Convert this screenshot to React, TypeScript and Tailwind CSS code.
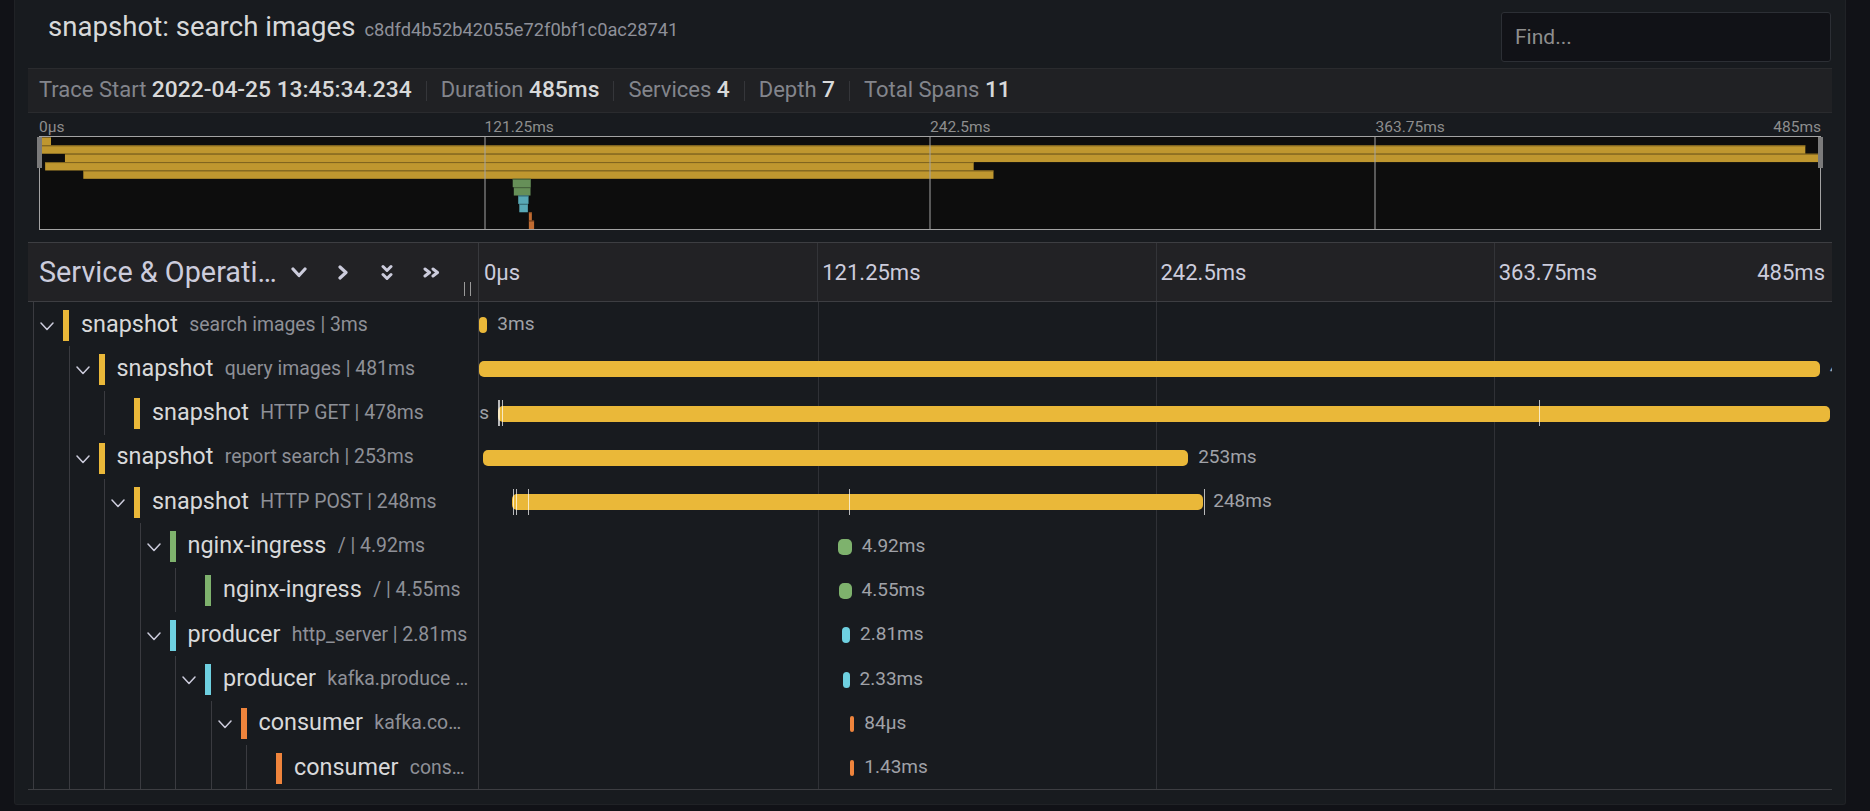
import React from 'react';

type Span = {
  service: string;
  op: string;
  level: number;
  kids: boolean;
  bar: string;
  mm: string;
  mmEdge: string;
  start: number;
  dur: number;
  label: string;
  leftLabel?: boolean;
  marks?: number[];
};

const TOTAL = 485;
const TL_W = 1352;
const MM_W = 1780;

const gold = { bar: 'bg-[#eab839]', mm: '#bf972f', mmEdge: '#7d621f' };
const green = { bar: 'bg-[#7eb26d]', mm: '#668f58', mmEdge: '#435e3a' };
const blue = { bar: 'bg-[#6ed0e0]', mm: '#59a8b5', mmEdge: '#3a6e77' };
const orange = { bar: 'bg-[#ef843c]', mm: '#c06b31', mmEdge: '#7e4620' };

const spans: Span[] = [
  { service: 'snapshot', op: 'search images | 3ms', level: 0, kids: true, ...gold, start: 0, dur: 3, label: '3ms' },
  { service: 'snapshot', op: 'query images | 481ms', level: 1, kids: true, ...gold, start: 0, dur: 481, label: '481ms' },
  {
    service: 'snapshot', op: 'HTTP GET | 478ms', level: 2, kids: false, ...gold, start: 6.8, dur: 478,
    label: '478ms', leftLabel: true, marks: [6.64, 7.35, 8.25, 380.3],
  },
  { service: 'snapshot', op: 'report search | 253ms', level: 1, kids: true, ...gold, start: 1.4, dur: 253, label: '253ms' },
  {
    service: 'snapshot', op: 'HTTP POST | 248ms', level: 2, kids: true, ...gold, start: 11.8, dur: 248,
    label: '248ms', marks: [12.34, 13.27, 17.47, 132.9, 259.9],
  },
  { service: 'nginx-ingress', op: '/ | 4.92ms', level: 3, kids: true, ...green, start: 128.8, dur: 4.92, label: '4.92ms' },
  { service: 'nginx-ingress', op: '/ | 4.55ms', level: 4, kids: false, ...green, start: 129.1, dur: 4.55, label: '4.55ms' },
  { service: 'producer', op: 'http_server | 2.81ms', level: 3, kids: true, ...blue, start: 130.3, dur: 2.81, label: '2.81ms' },
  { service: 'producer', op: 'kafka.produce images | 2.33ms', level: 4, kids: true, ...blue, start: 130.6, dur: 2.33, label: '2.33ms' },
  { service: 'consumer', op: 'kafka.consume | 84μs', level: 5, kids: true, ...orange, start: 133.2, dur: 0.084, label: '84μs' },
  { service: 'consumer', op: 'consume images | 1.43ms', level: 6, kids: false, ...orange, start: 133.2, dur: 1.43, label: '1.43ms' },
];

const AngleDown = () => (
  <svg width="16" height="11" viewBox="0 0 16 11" fill="none" className="shrink-0">
    <path d="M2 2l6 6.5L14 2" stroke="currentColor" strokeWidth="3.2" strokeLinecap="round" strokeLinejoin="round" />
  </svg>
);

const AngleRight = () => (
  <svg width="10" height="15" viewBox="0 0 10 15" fill="none" className="shrink-0">
    <path d="M2 2l6 5.5L2 13" stroke="currentColor" strokeWidth="3.2" strokeLinecap="round" strokeLinejoin="round" />
  </svg>
);

const AngleDoubleDown = () => (
  <svg width="12" height="17" viewBox="0 0 12 17" fill="none" className="shrink-0">
    <path d="M2 2.5l4 4 4-4M2 10.5l4 4 4-4" stroke="currentColor" strokeWidth="3" strokeLinecap="round" strokeLinejoin="round" />
  </svg>
);

const AngleDoubleRight = () => (
  <svg width="17" height="11" viewBox="0 0 17 11" fill="none" className="shrink-0">
    <path d="M2 2l4.5 3.5L2 9M10 2l4.5 3.5L10 9" stroke="currentColor" strokeWidth="3" strokeLinecap="round" strokeLinejoin="round" />
  </svg>
);

const RowChevron = () => (
  <svg width="14" height="9" viewBox="0 0 14 9" fill="none" className="ml-[6px] mt-[4px] shrink-0 text-[#ccccdc]">
    <path d="M1 1l6 6.5L13 1" stroke="currentColor" strokeWidth="1.5" strokeLinecap="round" strokeLinejoin="round" />
  </svg>
);

function Stat({ label, value }: { label: string; value: string }) {
  return (
    <span className="whitespace-nowrap text-[22px] text-[#83858c]">
      {label} <span className="text-[22.8px] font-medium text-[#d8d9da]">{value}</span>
    </span>
  );
}

const Sep = () => <span className="mx-[14px] h-[20px] w-px bg-[#35363a]" />;

function Minimap() {
  const rowH = 92 / spans.length;
  const k = MM_W / TOTAL;
  return (
    <div className="relative ml-[11px] h-[94px] w-[1782px] border border-[#a3a3a3] bg-[#0d0d0d]">
      <svg width={MM_W} height={92} className="block">
        {spans.map((s, i) => {
          const x = s.start * k;
          const w = Math.max(s.dur * k, 3);
          const y = i * rowH;
          return (
            <g key={i}>
              <rect x={x} y={y} width={w} height={rowH} fill={s.mm} />
              <rect x={x} y={y} width={w} height={1} fill={s.mmEdge} />
            </g>
          );
        })}
        {[1, 2, 3].map((n) => (
          <rect key={n} x={n * 445 - 0.5} y={0} width={1} height={92} fill="#a3a3a3" />
        ))}
      </svg>
      <div className="absolute -left-[3px] top-0 h-[31px] w-[5px] bg-[#7b7b7b]" />
      <div className="absolute -right-[3px] top-0 h-[31px] w-[5px] bg-[#7b7b7b]" />
    </div>
  );
}

function Timeline({ s }: { s: Span }) {
  const k = TL_W / TOTAL;
  const left = s.start * k;
  const width = Math.max(s.dur * k, 4);
  return (
    <div className="relative flex-1 overflow-hidden">
      <div className={`absolute top-1/2 -mt-[7px] h-[16px] rounded-[5px] ${s.bar}`} style={{ left, width }} />
      {s.marks?.map((m, i) => (
        <div key={i} className="absolute top-1/2 -mt-[12.5px] h-[26px] w-px bg-white/70" style={{ left: m * k }} />
      ))}
      <span
        className="absolute top-1/2 -translate-y-1/2 whitespace-nowrap text-[19px] text-[#a0a2a8]"
        style={s.leftLabel ? { right: TL_W - left + 10 } : { left: left + width + 10 }}
      >
        {s.label}
      </span>
    </div>
  );
}

function Row({ s }: { s: Span }) {
  return (
    <div className="flex h-[44.3px]">
      <div className="flex w-[451px] shrink-0 items-stretch overflow-hidden border-r border-[#38393d] pl-[5px] pr-[7px]">
        {Array.from({ length: s.level }).map((_, i) => (
          <span key={i} className="w-[35.5px] shrink-0 border-l border-[#3a3b40]" />
        ))}
        <span className="flex w-[30px] shrink-0 items-center border-l border-[#3a3b40]">
          {s.kids && <RowChevron />}
        </span>
        <span className={`mt-[2px] h-[31px] w-[6px] shrink-0 self-center ${s.bar}`} />
        <span className="ml-[12px] flex min-w-0 items-center">
          <span className="shrink-0 whitespace-nowrap text-[23.4px] text-[#d8d9da]">{s.service}</span>
          <span className="ml-[11.5px] truncate text-[19.4px] text-[#8e9097]">{s.op}</span>
        </span>
      </div>
      <Timeline s={s} />
    </div>
  );
}

export default function App() {
  return (
    <div className="min-h-screen w-full bg-[#111217] font-['Roboto',sans-serif]">
      <div className="ml-[14px] w-[1832px] rounded-b-[3px] border-x border-b border-[#202226] bg-[#181b1f] px-[13px] pb-[14px]">
        {/* title + find */}
        <div className="flex h-[68px] items-start justify-between">
          <div className="flex items-baseline pl-[20px] pt-[11px] leading-[32px]">
            <h1 className="text-[27.6px] font-normal text-[#d8d9da]">snapshot: search images</h1>
            <span className="ml-[9px] text-[18.3px] text-[#8e9099]">c8dfd4b52b42055e72f0bf1c0ac28741</span>
          </div>
          <input
            readOnly
            placeholder="Find..."
            className="mr-px mt-[12px] h-[50px] w-[330px] rounded-[3px] border border-[#2c2f35] bg-[#111217] px-[13px] text-[21px] text-[#d8d9da] outline-none placeholder:text-[#8e8e8e]"
          />
        </div>

        {/* trace stats */}
        <div className="flex h-[45px] items-center border-y border-[#2a2b2e] bg-[#202124] pl-[11px]">
          <Stat label="Trace Start" value="2022-04-25 13:45:34.234" />
          <Sep />
          <Stat label="Duration" value="485ms" />
          <Sep />
          <Stat label="Services" value="4" />
          <Sep />
          <Stat label="Depth" value="7" />
          <Sep />
          <Stat label="Total Spans" value="11" />
        </div>

        {/* minimap */}
        <div className="ml-[11px] grid h-[23px] w-[1782px] grid-cols-4 pt-[5px] text-[15.5px] leading-[18px] text-[#8e8e8e]">
          <span>0μs</span>
          <span>121.25ms</span>
          <span>242.5ms</span>
          <span className="flex justify-between">
            <span>363.75ms</span>
            <span>485ms</span>
          </span>
        </div>
        <Minimap />

        {/* column header */}
        <div className="mt-[12px] flex h-[60px] border-y border-[#3d3e42] bg-[#222225] text-[#ccccdc]">
          <div className="flex w-[451px] shrink-0 items-center border-r border-[#38393d]">
            <span className="ml-[11px] mt-[2px] w-[246px] truncate text-[28.8px]">Service &amp; Operation</span>
            <span className="ml-[6px]"><AngleDown /></span>
            <span className="ml-[31px]"><AngleRight /></span>
            <span className="ml-[33px]"><AngleDoubleDown /></span>
            <span className="ml-[30px]"><AngleDoubleRight /></span>
            <span className="mb-[5px] ml-[24px] flex gap-[5px] self-end">
              <span className="h-[14px] w-px bg-[#9a9a9a]" />
              <span className="h-[14px] w-px bg-[#9a9a9a]" />
            </span>
          </div>
          <div className="grid flex-1 grid-cols-4 text-[22px]">
            <span className="flex items-center pl-[5px]">0μs</span>
            <span className="flex items-center border-l border-[#333438] pl-[4px]">121.25ms</span>
            <span className="flex items-center border-l border-[#333438] pl-[4px]">242.5ms</span>
            <span className="flex items-center justify-between border-l border-[#333438] pl-[4px] pr-[7px]">
              <span>363.75ms</span>
              <span>485ms</span>
            </span>
          </div>
        </div>

        {/* span rows */}
        <div className="relative border-b border-[#3d3e42]">
          <div className="pointer-events-none absolute inset-y-0 left-[452px] right-0 grid grid-cols-4">
            <span />
            <span className="border-l border-[#2f3136]" />
            <span className="border-l border-[#2f3136]" />
            <span className="border-l border-[#2f3136]" />
          </div>
          {spans.map((s, i) => (
            <Row key={i} s={s} />
          ))}
        </div>
      </div>
    </div>
  );
}
